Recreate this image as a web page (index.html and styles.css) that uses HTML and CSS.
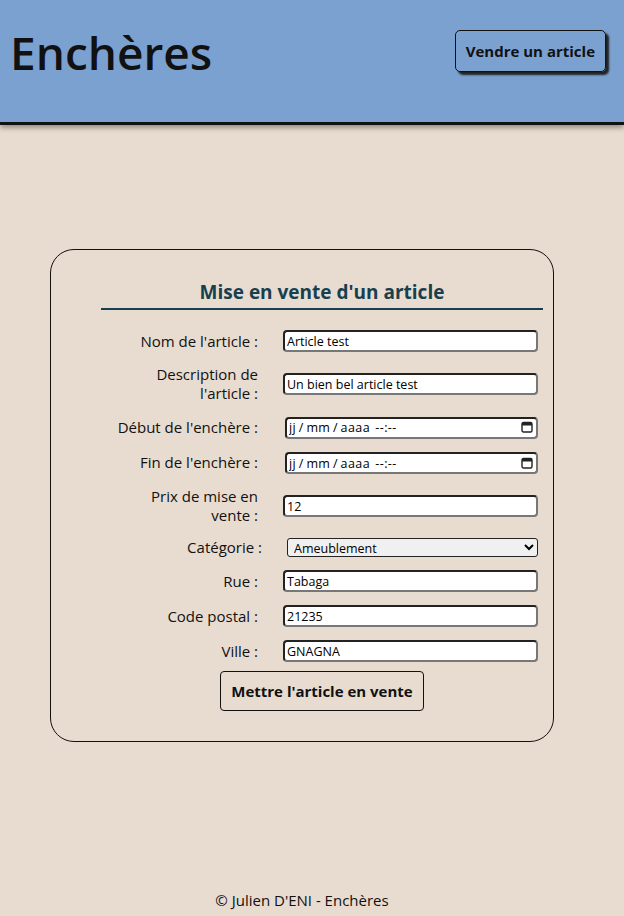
FILE: index.html
```html
<!DOCTYPE html>
<html lang="fr">
<head>
<meta charset="UTF-8" />
<meta name="viewport" content="width=device-width, initial-scale=1" />
<title>Enchères - Vendre un article</title>
<link rel="stylesheet" href="styles.css">
</head>
<body>

<header class="top-bar">
  <h1>Enchères</h1>
  <a class="sell-btn" href="#">Vendre un article</a>
</header>

<main class="page">
  <div class="card">
    <h2 class="card-title">Mise en vente d'un article</h2>

    <form class="sell-form">
      <label for="nom">Nom de l'article :</label>
      <input type="text" id="nom" value="Article test" />

      <label for="desc">Description de l'article :</label>
      <input type="text" id="desc" value="Un bien bel article test" />

      <label for="debut">Début de l'enchère :</label>
      <div class="date-wrap">
        <input type="text" class="date-field" id="debut" value="jj / mm / aaaa  --:--" />
        <svg class="cal-icon" viewBox="0 0 12 12" width="12" height="12"><rect x="1" y="1.5" width="10" height="9.5" rx="1.5" fill="none" stroke="#222" stroke-width="1.4"/><rect x="1" y="1.5" width="10" height="3" fill="#222"/></svg>
      </div>

      <label for="fin">Fin de l'enchère :</label>
      <div class="date-wrap">
        <input type="text" class="date-field" id="fin" value="jj / mm / aaaa  --:--" />
        <svg class="cal-icon" viewBox="0 0 12 12" width="12" height="12"><rect x="1" y="1.5" width="10" height="9.5" rx="1.5" fill="none" stroke="#222" stroke-width="1.4"/><rect x="1" y="1.5" width="10" height="3" fill="#222"/></svg>
      </div>

      <label for="prix">Prix de mise en vente :</label>
      <input type="text" id="prix" value="12" />

      <label for="cat" class="label-select">Catégorie :</label>
      <select id="cat">
        <option>Ameublement</option>
        <option>Informatique</option>
        <option>Vêtement</option>
        <option>Sport &amp; Loisirs</option>
      </select>

      <label for="rue">Rue :</label>
      <input type="text" id="rue" value="Tabaga" />

      <label for="cp">Code postal :</label>
      <input type="text" id="cp" value="21235" />

      <label for="ville">Ville :</label>
      <input type="text" id="ville" value="GNAGNA" />

      <button type="submit">Mettre l'article en vente</button>
    </form>
  </div>
</main>

<footer class="footer">© Julien D'ENI - Enchères</footer>

</body>
</html>
```

FILE: styles.css
```css
body {
  font-family: "Trebuchet MS", "Open Sans", "DejaVu Sans", sans-serif;
  background-color: #e8dcd0;
  color: #111;
  margin: 0;
  min-height: 100vh;
  display: flex;
  flex-direction: column;
}

.top-bar {
  background-color: #7ba1d1;
  height: 122px;
  border-bottom: 3px solid #111;
  box-shadow: 0 3px 5px rgba(0,0,0,0.35);
  display: flex;
  justify-content: space-between;
  align-items: flex-start;
  padding: 0 18px 0 10px;
}

.top-bar h1 {
  margin: 22px 0 0;
  font-size: 46px;
  line-height: 60px;
  font-weight: 600;
}

.sell-btn {
  margin-top: 30px;
  padding: 0 10px;
  height: 40px;
  line-height: 40px;
  border: 1px solid #111;
  border-radius: 5px;
  box-shadow: 3px 3px 2px #222;
  color: #111;
  text-decoration: none;
  font-weight: bold;
  font-size: 15px;
}

.page {
  flex: 1;
  padding-top: 124px;
}

.card {
  margin-left: 50px;
  width: 502px;
  border: 1px solid #111;
  border-radius: 24px;
  padding: 30px 0 30px;
}

.card-title {
  margin: 0 10px 0 50px;
  padding-bottom: 4px;
  border-bottom: 2px solid #164050;
  color: #164050;
  text-align: center;
  font-size: 19px;
  line-height: 24px;
}

.sell-form {
  display: grid;
  grid-template-columns: 146px 255px;
  column-gap: 25px;
  row-gap: 13px;
  align-items: center;
  margin: 20px 0 0 61px;
  font-size: 15px;
}

.sell-form label {
  text-align: right;
  line-height: 19px;
}

.sell-form input {
  box-sizing: border-box;
  width: 100%;
  height: 22px;
  padding: 0 2px;
  border: 2px solid #222;
  border-right-color: #777;
  border-bottom-color: #777;
  border-radius: 4px;
  background: #fff;
  font-family: inherit;
  font-size: 12.5px;
  color: #000;
}

.date-wrap {
  position: relative;
  margin-left: 2px;
}

.sell-form .date-field {
  word-spacing: -1px;
  letter-spacing: 0.4px;
  white-space: pre;
}

.cal-icon {
  position: absolute;
  right: 5px;
  top: 5px;
}

.label-select {
  margin-right: -4px;
}

.sell-form select {
  box-sizing: border-box;
  margin-left: 4px;
  width: 251px;
  height: 19px;
  border: 1px solid #222;
  border-radius: 3px;
  background: #f0f0f0;
  font-family: inherit;
  font-size: 12.5px;
  padding: 0 2px;
}

.sell-form button {
  grid-column: 1 / 3;
  justify-self: center;
  margin: -4px 0 0 -6px;
  padding: 0 10px;
  height: 40px;
  background: transparent;
  border: 1px solid #111;
  border-radius: 4px;
  font-family: inherit;
  font-weight: bold;
  font-size: 15px;
  color: #111;
  cursor: pointer;
}

.footer {
  text-align: center;
  font-size: 15px;
  padding: 0 0 6px;
  margin-left: -20px;
}
```
